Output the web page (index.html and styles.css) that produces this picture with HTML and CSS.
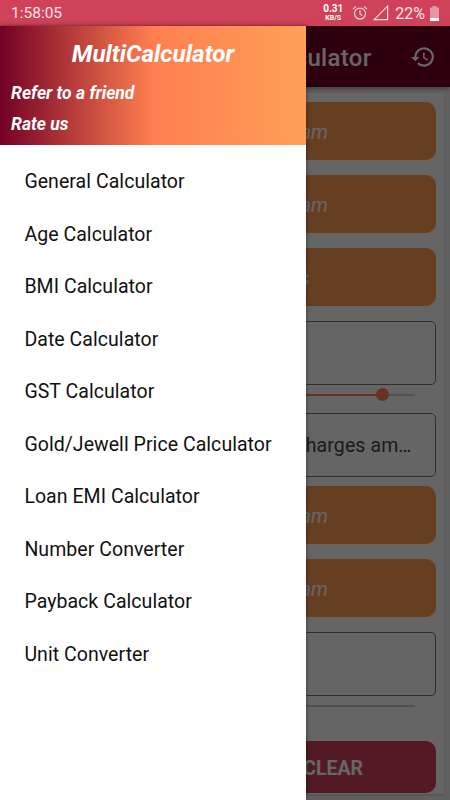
FILE: index.html
```html
<!DOCTYPE html>
<html lang="en">
<head>
    <meta charset="utf-8">
    <title>MultiCalculator</title>
    <link rel="stylesheet" href="styles.css">
</head>
<body>
    <div class="statusbar">
        <span class="clock">1:58:05</span>
        <div class="speed"><b>0.31</b><small>KB/S</small></div>
        <svg class="alarm" width="16" height="16" viewBox="0 0 16 16" fill="none" stroke="#fbdde2" stroke-width="1.1">
            <circle cx="8" cy="8.6" r="5.5"/>
            <path d="M8 5.3v3.6l2.3 1.6M1 4.2l3-2.8M15 4.2l-3-2.8"/>
        </svg>
        <svg class="signal" width="16" height="16" viewBox="0 0 16 16" fill="none" stroke="#fbdde2" stroke-width="1.2">
            <path d="M1.2 14.6H14.6V1.2z"/>
        </svg>
        <span class="percent">22%</span>
        <svg class="battery" width="9" height="15" viewBox="0 0 9 15">
            <path d="M2.5 0h4v1.5H9V15H0V1.5h2.5z" fill="#e896a3"/>
            <path d="M0 12h9v3H0z" fill="#fff"/>
        </svg>
    </div>

    <div class="app">
        <div class="appbar">
            <h1>culator</h1>
            <svg width="26" height="26" viewBox="0 0 24 24" fill="#fff">
                <path d="M13 3a9 9 0 0 0-9 9H1l3.89 3.89.07.14L9 12H6a7 7 0 1 1 2.06 4.94l-1.42 1.42A9 9 0 1 0 13 3zm-1 5v5l4.28 2.54.72-1.21-3.5-2.08V8H12z"/>
            </svg>
        </div>
        <div class="content">
            <div class="card">
                <div class="pill">am</div>
                <div class="pill">am</div>
                <div class="pill short">s</div>
                <div class="field"></div>
                <div class="slider"><div class="fill"></div><div class="thumb"></div><div class="rest"></div></div>
                <div class="field second">harges am…</div>
                <div class="pill">am</div>
                <div class="pill">am</div>
                <div class="field"></div>
                <div class="slider empty"><div class="rest"></div></div>
                <div class="clear">CLEAR</div>
            </div>
        </div>
        <div class="scrim"></div>

        <div class="drawer">
            <div class="header">
                <h2>MultiCalculator</h2>
                <a>Refer to a friend</a>
                <a>Rate us</a>
            </div>
            <ul class="menu">
                <li>General Calculator</li>
                <li>Age Calculator</li>
                <li>BMI Calculator</li>
                <li>Date Calculator</li>
                <li>GST Calculator</li>
                <li>Gold/Jewell Price Calculator</li>
                <li>Loan EMI Calculator</li>
                <li>Number Converter</li>
                <li>Payback Calculator</li>
                <li>Unit Converter</li>
            </ul>
        </div>
    </div>
</body>
</html>
```
FILE: styles.css
```css
* {
    box-sizing: border-box;
}

body {
    margin: 0;
    height: 800px;
    overflow: hidden;
    font-family: Roboto, "Liberation Sans", sans-serif;
}

/* status bar */
.statusbar {
    display: flex;
    align-items: center;
    height: 26px;
    padding: 0 11px;
    background-color: #cf4259;
    color: #fde6ea;
}

.clock {
    flex: 1;
    font-size: 15.5px;
}

.speed {
    display: flex;
    flex-direction: column;
    align-items: center;
    margin-right: 9px;
    color: #fff;
}

.speed b {
    font-size: 10px;
    line-height: 10px;
}

.speed small {
    font-size: 7px;
    font-weight: bold;
    line-height: 9px;
}

.alarm {
    margin-right: 5px;
}

.signal {
    margin-right: 6px;
}

.percent {
    margin-right: 5px;
    font-size: 16px;
}

/* page under the drawer */
.app {
    position: relative;
    height: 774px;
    background-color: #f0f0f0;
}

.appbar {
    display: flex;
    align-items: center;
    justify-content: flex-end;
    height: 61px;
    padding-right: 14px;
    background-color: #730026;
    box-shadow: 0 2px 4px rgba(0, 0, 0, 0.35);
    color: #fff;
}

.appbar h1 {
    margin: 3px 38.5px 0 0;
    font-size: 24px;
    font-weight: 500;
    letter-spacing: 0.3px;
}

.content {
    padding: 6px;
}

.card {
    display: flex;
    flex-direction: column;
    height: 701px;
    padding: 9px 8.5px 0 8px;
    border-radius: 3px;
    background-color: #fdfdfd;
    box-shadow: 0 1px 3px rgba(0, 0, 0, 0.15);
}

.pill {
    display: flex;
    align-items: center;
    justify-content: flex-end;
    height: 58px;
    margin-bottom: 15px;
    padding: 2px 107.5px 0 0;
    border-radius: 10px;
    background-color: #ff9b56;
    color: #fff;
    font-size: 20px;
    font-style: italic;
}

.short {
    padding-right: 126px;
}

.field {
    display: flex;
    align-items: center;
    justify-content: flex-end;
    height: 64px;
    padding-right: 23px;
    border: 1px solid #777;
    border-radius: 5px;
    color: #444;
    font-size: 19.5px;
    letter-spacing: 0.1px;
}

.slider {
    display: flex;
    align-items: center;
    height: 13px;
    margin: 3px 20.5px 12px;
}

.fill {
    flex: 1;
    height: 2px;
    background-color: #ff7f50;
}

.thumb {
    width: 13px;
    height: 13px;
    border-radius: 50%;
    background-color: #ff7f50;
}

.rest {
    width: 26px;
    height: 2px;
    background-color: #ccc;
}

.second {
    margin-bottom: 9px;
}

.empty .rest {
    flex: 1;
}

.clear {
    display: flex;
    align-items: center;
    justify-content: flex-end;
    height: 52px;
    margin-top: 17px;
    padding: 2px 72.5px 0 0;
    border-radius: 10px;
    background-color: #cf4259;
    color: #fff;
    font-size: 19.5px;
    font-weight: bold;
}

.scrim {
    position: absolute;
    inset: 0;
    background-color: rgba(0, 0, 0, 0.6);
}

/* drawer */
.drawer {
    position: absolute;
    top: 0;
    left: 0;
    width: 306px;
    height: 774px;
    background-color: #fff;
    box-shadow: 0 0 4px rgba(0, 0, 0, 0.5);
}

.header {
    display: flex;
    flex-direction: column;
    height: 119px;
    padding: 13px 11px 0;
    background-image: linear-gradient(to right, #730026, #ff7f50 50%, #ff9f58);
    color: #fff;
    font-style: italic;
    font-weight: bold;
}

.header h2 {
    margin: 0 0 15px;
    font-size: 24.3px;
    line-height: 29px;
    text-align: center;
}

.header a {
    margin-bottom: 10px;
    font-size: 17.5px;
    line-height: 21px;
}

.menu {
    margin: 0;
    padding: 11px 0 0 24.4px;
    list-style: none;
}

.menu li {
    height: 52.5px;
    color: #111;
    font-size: 19.5px;
    line-height: 52.5px;
    letter-spacing: 0.05px;
}
```
